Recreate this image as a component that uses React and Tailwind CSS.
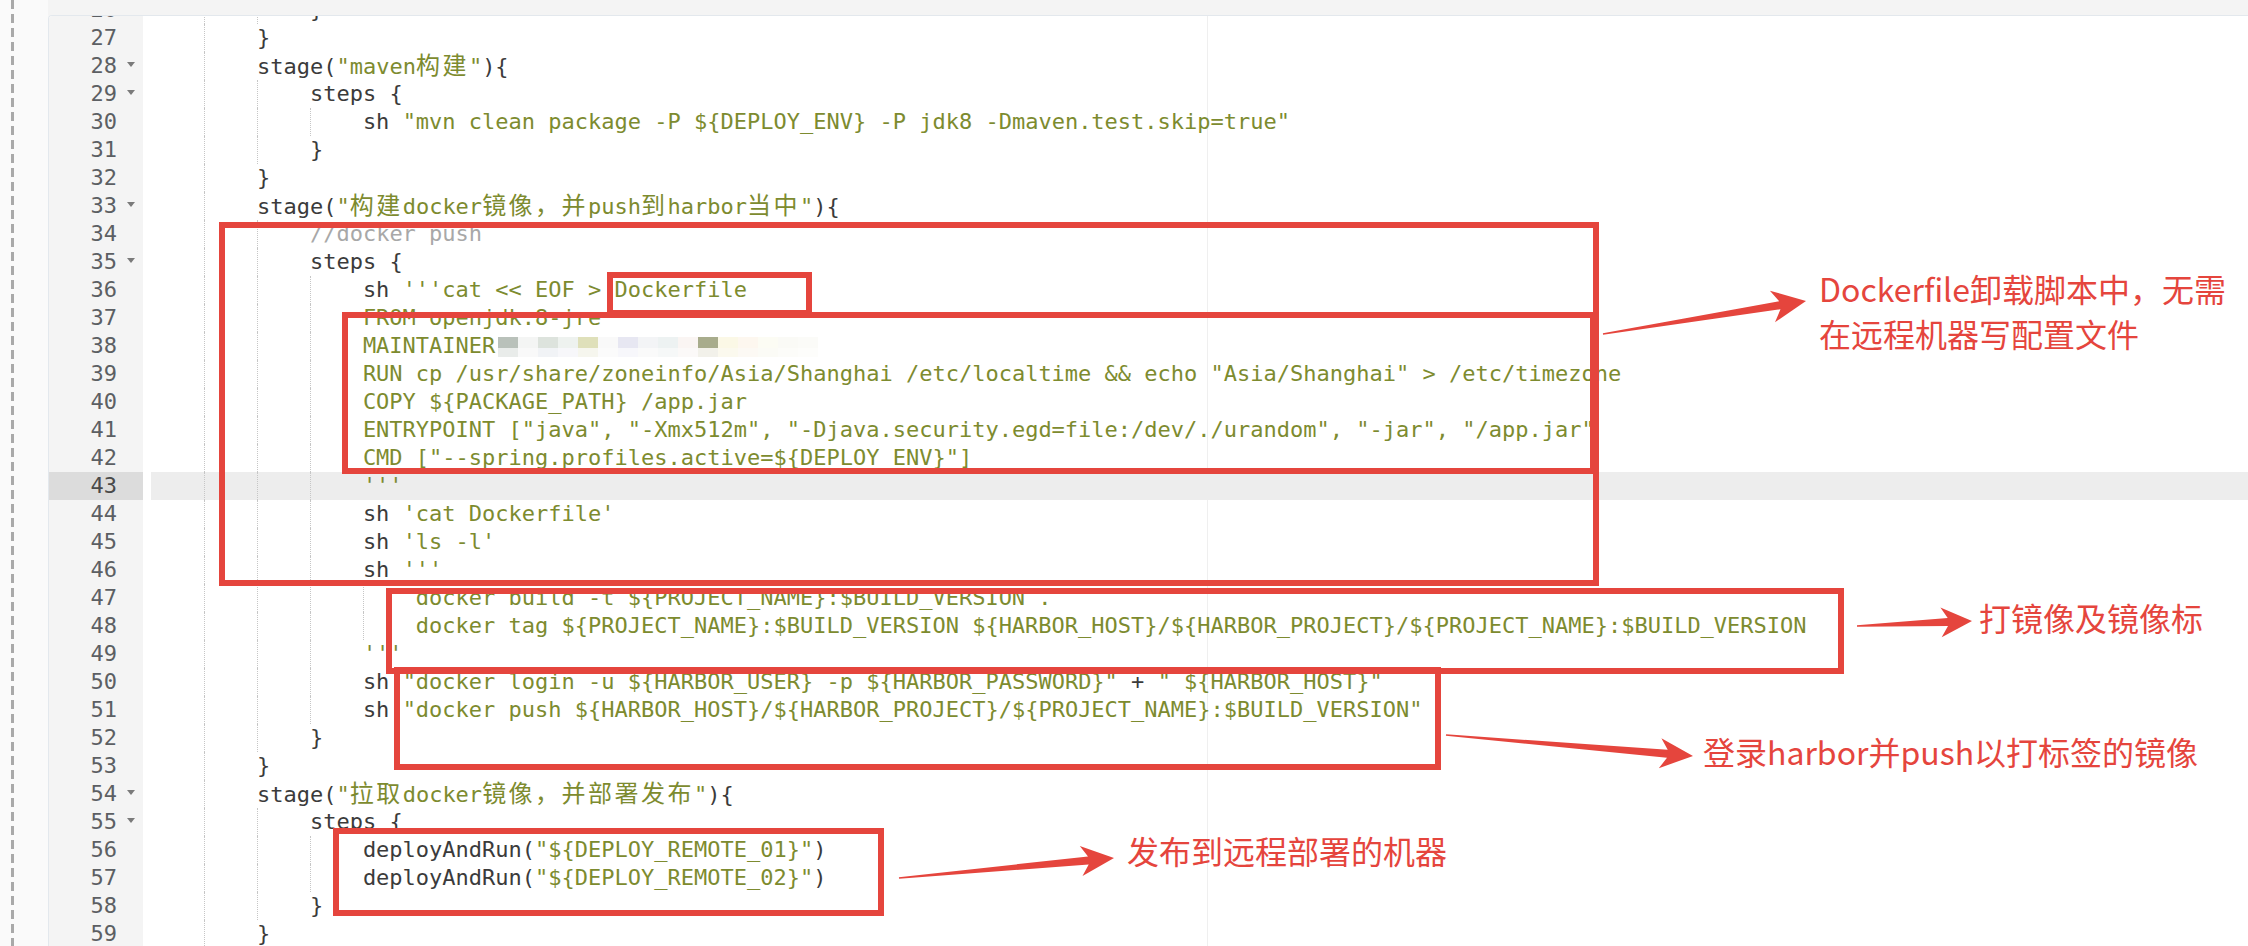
import React from 'react';

const K = 'text-[#3b3b3b]';
const S = 'text-[#7d8b2f]';
const C = 'text-[#a8a8a8]';

const LINES = [
  { n: 26, i: 12, t: [['}', K]] },
  { n: 27, i: 8, t: [['}', K]] },
  { n: 28, i: 8, f: 1, t: [['stage(', K], ['"maven构建"', S], ['){', K]] },
  { n: 29, i: 12, f: 1, t: [['steps {', K]] },
  { n: 30, i: 16, t: [['sh ', K], ['"mvn clean package -P ${DEPLOY_ENV} -P jdk8 -Dmaven.test.skip=true"', S]] },
  { n: 31, i: 12, t: [['}', K]] },
  { n: 32, i: 8, t: [['}', K]] },
  { n: 33, i: 8, f: 1, t: [['stage(', K], ['"构建docker镜像，并push到harbor当中"', S], ['){', K]] },
  { n: 34, i: 12, t: [['//docker push', C]] },
  { n: 35, i: 12, f: 1, t: [['steps {', K]] },
  { n: 36, i: 16, t: [['sh ', K], ["'''cat << EOF > Dockerfile", S]] },
  { n: 37, i: 16, t: [['FROM openjdk:8-jre', S]] },
  { n: 38, i: 16, m: 1, t: [['MAINTAINER', S]] },
  { n: 39, i: 16, t: [['RUN cp /usr/share/zoneinfo/Asia/Shanghai /etc/localtime && echo "Asia/Shanghai" > /etc/timezone', S]] },
  { n: 40, i: 16, t: [['COPY ${PACKAGE_PATH} /app.jar', S]] },
  { n: 41, i: 16, t: [['ENTRYPOINT ["java", "-Xmx512m", "-Djava.security.egd=file:/dev/./urandom", "-jar", "/app.jar"', S]] },
  { n: 42, i: 16, t: [['CMD ["--spring.profiles.active=${DEPLOY_ENV}"]', S]] },
  { n: 43, i: 16, h: 1, t: [["'''", S]] },
  { n: 44, i: 16, t: [['sh ', K], ["'cat Dockerfile'", S]] },
  { n: 45, i: 16, t: [['sh ', K], ["'ls -l'", S]] },
  { n: 46, i: 16, t: [['sh ', K], ["'''", S]] },
  { n: 47, i: 20, t: [['docker build -t ${PROJECT_NAME}:$BUILD_VERSION .', S]] },
  { n: 48, i: 20, t: [['docker tag ${PROJECT_NAME}:$BUILD_VERSION ${HARBOR_HOST}/${HARBOR_PROJECT}/${PROJECT_NAME}:$BUILD_VERSION', S]] },
  { n: 49, i: 16, t: [["'''", S]] },
  { n: 50, i: 16, t: [['sh ', K], ['"docker login -u ${HARBOR_USER} -p ${HARBOR_PASSWORD}"', S], [' + ', K], ['" ${HARBOR_HOST}"', S]] },
  { n: 51, i: 16, t: [['sh ', K], ['"docker push ${HARBOR_HOST}/${HARBOR_PROJECT}/${PROJECT_NAME}:$BUILD_VERSION"', S]] },
  { n: 52, i: 12, t: [['}', K]] },
  { n: 53, i: 8, t: [['}', K]] },
  { n: 54, i: 8, f: 1, t: [['stage(', K], ['"拉取docker镜像，并部署发布"', S], ['){', K]] },
  { n: 55, i: 12, f: 1, t: [['steps {', K]] },
  { n: 56, i: 16, t: [['deployAndRun(', K], ['"${DEPLOY_REMOTE_01}"', S], [')', K]] },
  { n: 57, i: 16, t: [['deployAndRun(', K], ['"${DEPLOY_REMOTE_02}"', S], [')', K]] },
  { n: 58, i: 12, t: [['}', K]] },
  { n: 59, i: 8, t: [['}', K]] },
];

const MOSAIC = [
  ['#b9c1ba', '#e9ecea'],
  ['#f4f5f4', '#f9f9f9'],
  ['#dde3dd', '#f1f3f6'],
  ['#eef2ef', '#f7f7fa'],
  ['#dfe0ba', '#f6f6ee'],
  ['#f9f9f9', '#fbfbfb'],
  ['#e7e7f2', '#f7f7fb'],
  ['#f3f4f6', '#fafafa'],
  ['#edf2f2', '#f6f8f8'],
  ['#faf5f3', '#fbf9f8'],
  ['#a8ac8c', '#f2f1ea'],
  ['#fbf8e6', '#fbf9ee'],
  ['#fdf7ef', '#fcf9f4'],
  ['#fcfcf4', '#fbfbf6'],
  ['#fafaf6', '#fcfcf9'],
  ['#fbfbf8', '#fdfdfb'],
];

function renderText(str) {
  const parts = str.split(/([\u3000-\u9fff\uff00-\uffef]+)/);
  return parts.map((p, idx) =>
    /[\u3000-\u9fff\uff00-\uffef]/.test(p) ? (
      <span key={idx} className="text-[24px] leading-[28px] tracking-[2.48px]">{p}</span>
    ) : (
      <React.Fragment key={idx}>{p}</React.Fragment>
    )
  );
}

function arrowPoints(x1, y1, x2, y2, head = 33, hw = 15, sw = 8, tw = 1.5) {
  const dx = x2 - x1;
  const dy = y2 - y1;
  const L = Math.hypot(dx, dy);
  const ux = dx / L;
  const uy = dy / L;
  const nx = -uy;
  const ny = ux;
  const bx = x2 - ux * head;
  const by = y2 - uy * head;
  const jx = x2 - ux * head * 0.78;
  const jy = y2 - uy * head * 0.78;
  const p = [
    [x1 + (nx * tw) / 2, y1 + (ny * tw) / 2],
    [jx + (nx * sw) / 2, jy + (ny * sw) / 2],
    [bx + nx * hw, by + ny * hw],
    [x2, y2],
    [bx - nx * hw, by - ny * hw],
    [jx - (nx * sw) / 2, jy - (ny * sw) / 2],
    [x1 - (nx * tw) / 2, y1 - (ny * tw) / 2],
  ];
  return p.map((q) => q.map((v) => v.toFixed(1)).join(',')).join(' ');
}

function Gutter() {
  return (
    <div className="w-[94px] shrink-0 bg-[#f4f4f4]">
      <div className="-mt-[20px] flex flex-col">
        {LINES.map((l) => (
          <div
            key={l.n}
            className={
              l.h
                ? 'flex h-[28px] items-center justify-end bg-[#dcdcdc] text-[#4a4a4a]'
                : 'flex h-[28px] items-center justify-end text-[#5c5f63]'
            }
          >
            <span className="leading-[28px]">{l.n}</span>
            <span className="flex w-[26px] items-center pl-[10px] pb-[3px]">
              {l.f ? (
                <span className="h-0 w-0 border-l-[4.5px] border-r-[4.5px] border-t-[5px] border-l-transparent border-r-transparent border-t-[#7a7a7a]" />
              ) : null}
            </span>
          </div>
        ))}
      </div>
    </div>
  );
}

function CodeRow({ l }) {
  const units = Array.from({ length: l.i / 4 });
  return (
    <div
      className={
        l.h
          ? 'flex h-[28px] items-stretch overflow-hidden whitespace-pre bg-[#ededed]'
          : 'flex h-[28px] items-stretch overflow-hidden whitespace-pre'
      }
    >
      {units.map((_, k) => (
        <span
          key={k}
          className={
            k === 0
              ? 'w-[4ch] shrink-0'
              : 'w-[4ch] shrink-0 border-l border-dotted border-[#c6c6c6]'
          }
        />
      ))}
      <span className="leading-[28px]">
        {l.t.map(([txt, cls], idx) => (
          <span key={idx} className={cls}>
            {renderText(txt)}
          </span>
        ))}
      </span>
      {l.m ? (
        <span className="ml-[3px] mt-[5px] grid h-[20px] grid-flow-col grid-rows-[11px_9px] auto-cols-[20px] self-start blur-[0.7px]">
          {MOSAIC.map(([a, b], idx) => (
            <React.Fragment key={idx}>
              <span style={{ backgroundColor: a }} />
              <span style={{ backgroundColor: b }} />
            </React.Fragment>
          ))}
        </span>
      ) : null}
    </div>
  );
}

function Overlay() {
  const red = '#e5453d';
  return (
    <div className="pointer-events-none absolute inset-0">
      <div className="absolute left-[219px] top-[222px] h-[364px] w-[1380px] border-[6px] border-[#e5453d]" />
      <div className="absolute left-[607px] top-[272px] h-[44px] w-[205px] border-[6px] border-[#e5453d]" />
      <div className="absolute left-[342px] top-[312px] h-[162px] w-[1254px] border-[6px] border-[#e5453d]" />
      <div className="absolute left-[386px] top-[588px] h-[86px] w-[1458px] border-[6px] border-[#e5453d]" />
      <div className="absolute left-[394px] top-[667px] h-[103px] w-[1047px] border-[6px] border-[#e5453d]" />
      <div className="absolute left-[333px] top-[828px] h-[88px] w-[551px] border-[6px] border-[#e5453d]" />

      <svg className="absolute left-0 top-0" width="2248" height="946" viewBox="0 0 2248 946">
        <polygon points={arrowPoints(1603, 334, 1806, 301, 34, 16, 8)} fill={red} />
        <polygon points={arrowPoints(1857, 626, 1972, 621, 31, 15, 8)} fill={red} />
        <polygon points={arrowPoints(1446, 735, 1693, 756, 33, 15, 8)} fill={red} />
        <polygon points={arrowPoints(899, 878, 1114, 858, 33, 15, 8)} fill={red} />
      </svg>

      <div className="absolute left-[1819px] top-[266px] whitespace-nowrap font-['Noto_Sans_CJK_SC',sans-serif] text-[32px] leading-[45px] text-[#e5453d]">
        <div>Dockerfile卸载脚本中，无需</div>
        <div>在远程机器写配置文件</div>
      </div>
      <div className="absolute left-[1979px] top-[595px] whitespace-nowrap font-['Noto_Sans_CJK_SC',sans-serif] text-[32px] leading-[45px] text-[#e5453d]">
        打镜像及镜像标
      </div>
      <div className="absolute left-[1703px] top-[729px] whitespace-nowrap font-['Noto_Sans_CJK_SC',sans-serif] text-[32px] leading-[45px] text-[#e5453d]">
        登录harbor并push以打标签的镜像
      </div>
      <div className="absolute left-[1127px] top-[828px] whitespace-nowrap font-['Noto_Sans_CJK_SC',sans-serif] text-[32px] leading-[45px] text-[#e5453d]">
        发布到远程部署的机器
      </div>
    </div>
  );
}

export default function App() {
  return (
    <div className="relative flex h-[946px] w-[2248px] overflow-hidden bg-[#f6f6f6] font-['DejaVu_Sans_Mono','Noto_Sans_CJK_SC',monospace] text-[22px]">
      <div className="w-[48px] shrink-0 bg-[#fafafa] pl-[11px]">
        <div className="h-full w-[3px] bg-[repeating-linear-gradient(to_bottom,#a9a9a9_0px,#a9a9a9_9px,transparent_9px,transparent_14px)]" />
      </div>
      <div className="flex min-w-0 flex-1 flex-col">
        <div className="h-[15px] shrink-0 bg-[#f4f4f4]" />
        <div className="flex min-h-0 flex-1 overflow-hidden rounded-tl-[4px] border-l border-t border-[#e3e8ed] bg-white">
          <Gutter />
          <div className="min-w-0 flex-1 bg-[linear-gradient(to_right,transparent_1064px,#efefef_1064px,#efefef_1065px,transparent_1065px)] pl-[8px]">
            <div className="-mt-[20px] flex flex-col">
              {LINES.map((l) => (
                <CodeRow key={l.n} l={l} />
              ))}
            </div>
          </div>
        </div>
      </div>
      <Overlay />
    </div>
  );
}
